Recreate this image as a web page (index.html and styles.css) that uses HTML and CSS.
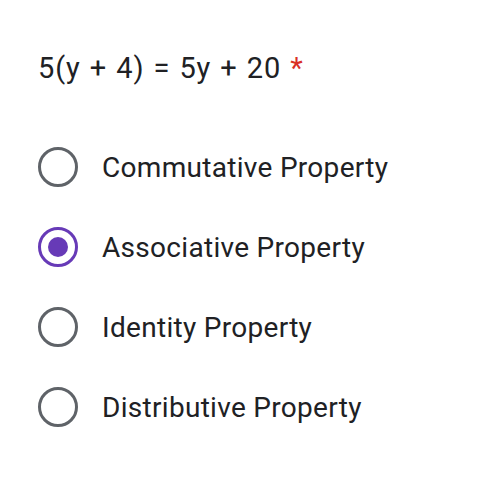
FILE: index.html
```html
<!DOCTYPE html>
<html>
<head>
<meta charset="utf-8">
<link rel="stylesheet" href="styles.css">
</head>
<body>
<div class="question">
  <div class="title">5(y + 4) = 5y + 20 <span class="req">*</span></div>
  <div class="options">
    <div class="option"><span class="radio"></span><span class="label">Commutative Property</span></div>
    <div class="option"><span class="radio checked"></span><span class="label">Associative Property</span></div>
    <div class="option"><span class="radio"></span><span class="label">Identity Property</span></div>
    <div class="option"><span class="radio"></span><span class="label">Distributive Property</span></div>
  </div>
</div>
</body>
</html>
```
FILE: styles.css
```css
html, body {
  margin: 0;
  padding: 0;
  background: #fff;
}
.question {
  padding: 48px 0 0 38px;
  font-family: Roboto, "Liberation Sans", sans-serif;
  color: #202124;
}
.title {
  font-size: 29px;
  line-height: 40px;
  height: 40px;
  letter-spacing: 0.9px;
  word-spacing: 1px;
}
.req {
  color: #d93025;
}
.options {
  display: flex;
  flex-direction: column;
  margin-top: 59px;
  gap: 40px;
}
.option {
  display: flex;
  align-items: center;
  height: 40px;
}
.radio {
  box-sizing: border-box;
  width: 40px;
  height: 40px;
  border: 3.5px solid #5f6368;
  border-radius: 50%;
  display: flex;
  align-items: center;
  justify-content: center;
  flex: none;
}
.radio.checked {
  border-color: #673ab7;
}
.radio.checked::after {
  content: "";
  width: 20px;
  height: 20px;
  border-radius: 50%;
  background: #673ab7;
}
.label {
  margin-left: 24px;
  font-size: 28px;
  letter-spacing: 0.3px;
}
```
